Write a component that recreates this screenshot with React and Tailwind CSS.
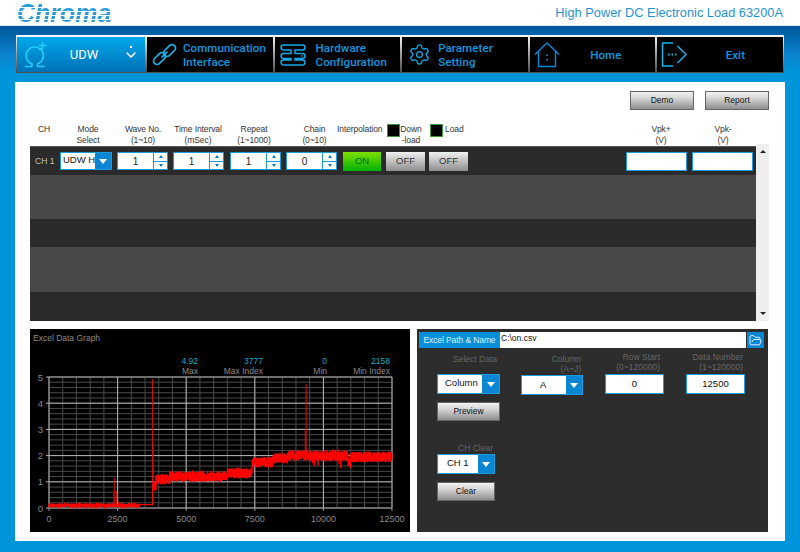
import { ChevronDown, FolderOpen, Settings } from "lucide-react";

const font = { fontFamily: "'Liberation Sans', Arial, sans-serif" };

// seeded noise so the trace is the same on every load
let seed = 7;
const rnd = () => {
  seed = (seed * 16807) % 2147483647;
  return seed / 2147483647;
};

const levelAt = (i) => {
  if (i < 3777) return 0.1;
  if (i < 3900) return 0.85;
  if (i < 4400) return 1.1;
  if (i < 6500) return 1.2;
  if (i < 7400) return 1.33;
  if (i < 8150) return 1.75;
  if (i < 8700) return 1.9;
  if (i < 10900) return 2.0;
  if (i < 11000) return 1.72;
  return 1.95;
};

const PX = (i) => 19 + (i / 12500) * 343;
const PY = (v) => 133 - v * 26.2;

const buildTrace = () => {
  const pts = [];
  for (let i = 0; i <= 12500; i += 4) {
    const base = levelAt(i);
    const amp = i < 3777 ? 0.07 : 0.2;
    let v = base + (rnd() - 0.5) * 2 * amp;
    if (i > 9400 && i < 10900 && rnd() < 0.02) v -= 0.35;
    if (i > 3300 && i < 3777) v = 0.13;
    pts.push(`${PX(i).toFixed(1)},${PY(v).toFixed(1)}`);
  }
  return pts.join(" ");
};
const trace = buildTrace();

const spikes = [
  [2400, 0.1, 1.15],
  [2370, 0.1, 0.7],
  [2470, 0.1, 0.65],
  [3777, 0.13, 4.92],
  [3790, 0.8, 2.5],
  [9370, 2, 4.72],
  [9340, 2, 3.0],
];

function Chart() {
  const minorX = [];
  for (let i = 0; i <= 12500; i += 500) minorX.push(PX(i));
  const minorY = [];
  for (let v = 0; v <= 5.01; v += 0.2) minorY.push(PY(v));
  return (
    <svg width="380" height="157" viewBox="0 0 380 157" className="block overflow-visible" style={font}>
      {minorX.map((x) => (
        <line key={x} x1={x} x2={x} y1={PY(5)} y2={PY(0)} stroke="#4a4a4a" strokeWidth="1" />
      ))}
      {minorY.map((y) => (
        <line key={y} x1={PX(0)} x2={PX(12500)} y1={y} y2={y} stroke="#4a4a4a" strokeWidth="1" />
      ))}
      {[0, 2500, 5000, 7500, 10000, 12500].map((t) => (
        <g key={t}>
          <line x1={PX(t)} x2={PX(t)} y1={PY(5)} y2={PY(0)} stroke="#b4b4b4" />
          <line x1={PX(t)} x2={PX(t)} y1={PY(0)} y2={PY(0) + 3} stroke="#999" />
          <text x={PX(t)} y={PY(0) + 14} fill="#8a8a8a" fontSize="9" textAnchor="middle">
            {t}
          </text>
        </g>
      ))}
      {[0, 1, 2, 3, 4, 5].map((v) => (
        <g key={v}>
          <line x1={PX(0) - 3} x2={PX(12500)} y1={PY(v)} y2={PY(v)} stroke="#b4b4b4" />
          <text x={PX(0) - 6} y={PY(v) + 3.5} fill="#8a8a8a" fontSize="9.5" textAnchor="end">
            {v}
          </text>
        </g>
      ))}
      <polyline points={trace} fill="none" stroke="#ff0000" strokeWidth="1.4" />
      {spikes.map(([i, a, b]) => (
        <line key={i} x1={PX(i)} x2={PX(i)} y1={PY(a)} y2={PY(b)} stroke="#e01010" strokeWidth="1" />
      ))}
    </svg>
  );
}

function OmegaIcon() {
  return (
    <svg width="24" height="27" viewBox="0 0 24 27" fill="none" stroke="#22d0f6" strokeWidth="1.6">
      <path d="M1 25.500h7v-2.700a8.600 8.600 0 1 1 5.600 0v2.700h7" />
      <path d="M18.500 1v7.500M15 4.500h7.500M17.500 7l-2 2" />
    </svg>
  );
}

function LinkIcon() {
  return (
    <svg width="25" height="25" viewBox="0 0 25 25" fill="none" stroke="#12b4ea" strokeWidth="1.7">
      <rect x="0.500" y="13" width="14" height="7" rx="3.500" transform="rotate(-45 7.500 16.500)" />
      <rect x="10.500" y="5" width="14" height="7" rx="3.500" transform="rotate(-45 17.500 8.500)" />
      <path d="M9.500 15.500l6-6" />
    </svg>
  );
}

function HardwareIcon() {
  return (
    <svg width="26" height="22" viewBox="0 0 26 22" fill="none" stroke="#12a8e6" strokeWidth="1.500">
      <path d="M3.500 1h19a2.400 2.400 0 0 1 0 5H15v3.500h7.500a2.400 2.400 0 0 1 0 5H15V16h7.500a2.400 2.400 0 0 1 0 5h-19a2.400 2.400 0 0 1 0-5H11v-1.500H3.500a2.400 2.400 0 0 1 0-5H11V6H3.500a2.400 2.400 0 0 1 0-5z" />
      <path d="M21 12h1.500" />
    </svg>
  );
}

function HomeIcon() {
  return (
    <svg width="26" height="26" viewBox="0 0 26 26" fill="none" stroke="#0a86d0" strokeWidth="1.500">
      <path d="M1 12.500 13 1l12 11.500" />
      <path d="M4.500 9.500v15h17v-15" />
      <path d="M13 12.500v1.500M13 17v1.500" strokeWidth="1.800" />
    </svg>
  );
}

function ExitIcon() {
  return (
    <svg width="26" height="25" viewBox="0 0 26 25" fill="none" stroke="#12b4ea" strokeWidth="1.500">
      <path d="M12 1H1.500v23H12" />
      <path d="M7 12.500h1.500M10.500 12.500H12M14 12.500h1.500" strokeWidth="1.800" />
      <path d="M16.500 4l8.500 8.500-8.500 8.500" />
    </svg>
  );
}

function NavButton({ icon, lines, iconClass, textClass }) {
  return (
    <div className="flex h-full w-0 flex-1 items-center bg-black">
      <div className={iconClass}>{icon}</div>
      <div className={textClass}>
        {lines.map((l) => (
          <div key={l}>{l}</div>
        ))}
      </div>
    </div>
  );
}

function Nav() {
  const navFont = { fontFamily: "Roboto, sans-serif" };
  const label = "text-[11.5px] font-medium leading-[14px] tracking-[0.1px] whitespace-nowrap text-[#0a98e0]";
  return (
    <div
      className="mx-[16px] mt-[9px] flex h-[38px] gap-[2px] bg-[linear-gradient(#ffffff,#a8a8a8_45%,#4a4a4a)] pt-[2px] pr-[1px] pb-[1px] pl-[1px]"
      style={navFont}
    >
      <div className="flex h-full w-[128px] shrink-0 items-center bg-[linear-gradient(#00a8ea,#0070b8)]">
        <div className="ml-[7px] w-[24px]">
          <OmegaIcon />
        </div>
        <div className="ml-[18px] w-[36px] text-center text-[13px] font-normal text-white">UDW</div>
        <div className="relative ml-[21px] flex w-[16px] justify-center">
          <ChevronDown size={16} strokeWidth={2.2} className="mt-[1px] text-white" />
          <span className="absolute top-0 h-[2px] w-[2px] bg-white" />
        </div>
      </div>
      <NavButton icon={<LinkIcon />} iconClass="ml-[5px] w-[25px]" textClass={`ml-[6px] ${label}`} lines={["Communication", "Interface"]} />
      <NavButton icon={<HardwareIcon />} iconClass="ml-[5px] w-[26px]" textClass={`ml-[10px] ${label}`} lines={["Hardware", "Configuration"]} />
      <NavButton
        icon={<Settings size={23} strokeWidth={1.4} className="text-[#12a8e6]" />}
        iconClass="ml-[6px] w-[23px]"
        textClass={`ml-[7px] ${label}`}
        lines={["Parameter", "Setting"]}
      />
      <NavButton icon={<HomeIcon />} iconClass="ml-[4px] w-[26px]" textClass={`ml-[24px] w-[44px] text-center ${label}`} lines={["Home"]} />
      <NavButton icon={<ExitIcon />} iconClass="ml-[4px] w-[26px]" textClass={`ml-[37px] w-[22px] text-center ${label}`} lines={["Exit"]} />
    </div>
  );
}

function SilverButton({ label, className }) {
  return (
    <div
      className={`flex items-center justify-center border border-[#666] bg-[linear-gradient(#f2f2f2,#dcdcdc_30%,#8e8e8e)] text-[8.5px] text-[#111] ${className}`}
    >
      {label}
    </div>
  );
}

function Spin({ value, className = "" }) {
  return (
    <div className={`flex h-[18px] w-[51px] border border-[#1a9be0] bg-white ${className}`}>
      <div className="flex flex-1 items-center justify-center text-[10px] text-[#222]">{value}</div>
      <div className="flex w-[14px] flex-col border-l border-[#1a9be0]">
        <div className="flex flex-1 items-center justify-center border-b border-[#1a9be0]">
          <span className="h-0 w-0 border-x-[2.5px] border-b-[3px] border-x-transparent border-b-[#0a7cc4]" />
        </div>
        <div className="flex flex-1 items-center justify-center">
          <span className="h-0 w-0 border-x-[2.5px] border-t-[3px] border-x-transparent border-t-[#0a7cc4]" />
        </div>
      </div>
    </div>
  );
}

function Select({ value, className, textClass = "pl-[2px]", arrowClass = "w-[16px]", heightClass = "h-[18px]" }) {
  return (
    <div className={`flex border border-[#1a9be0] bg-white ${heightClass} ${className}`}>
      <div className={`flex-1 text-[9.5px] leading-[13px] whitespace-nowrap text-[#111] ${textClass}`}>{value}</div>
      <div className={`flex items-center justify-center bg-[#0a86d2] ${arrowClass}`}>
        <span className="h-0 w-0 border-x-[4px] border-t-[5px] border-x-transparent border-t-white" />
      </div>
    </div>
  );
}

function Stat({ value, label, className }) {
  return (
    <div className={`text-right text-[8.5px] leading-[9.5px] ${className}`}>
      <div className="text-[#1aa6c8]">{value}</div>
      <div className="text-[#8a8a8a]">{label}</div>
    </div>
  );
}

function ChannelTable() {
  return (
    <div className="flex">
      <div className="flex h-[175px] w-[726px] flex-col border-t border-[#555] bg-[#2b2b2b]">
        <div className="flex h-[28px] items-center pl-[5px]">
          <div className="w-[25px] text-[8.5px] text-[#c4c4c4]">CH 1</div>
          <Select value="UDW H" className="w-[52px]" />
          <Spin value="1" className="ml-[5px]" />
          <Spin value="1" className="ml-[5px]" />
          <Spin value="1" className="ml-[6px]" />
          <Spin value="0" className="ml-[5px]" />
          <div className="ml-[6px] flex h-[19px] w-[38px] items-center justify-center bg-[linear-gradient(#7fe000,#00b000)] text-[9.5px] text-[#063]">
            ON
          </div>
          <div className="ml-[5px] flex h-[19px] w-[39px] items-center justify-center bg-[linear-gradient(#f0f0f0,#8e8e8e)] text-[9.5px] text-[#333]">
            OFF
          </div>
          <div className="ml-[4px] flex h-[19px] w-[39px] items-center justify-center bg-[linear-gradient(#f0f0f0,#8e8e8e)] text-[9.5px] text-[#333]">
            OFF
          </div>
          <div className="flex-1" />
          <div className="h-[19px] w-[61px] border border-[#1a9be0] bg-white" />
          <div className="mr-[3px] ml-[5px] h-[19px] w-[61px] border border-[#1a9be0] bg-white" />
        </div>
        <div className="h-[44px] bg-[#484848]" />
        <div className="h-[28px]" />
        <div className="h-[45px] bg-[#484848]" />
        <div className="flex-1" />
      </div>
      <div className="-mt-[2px] flex h-[177px] w-[13px] flex-col items-center justify-between bg-[#eeeeee] py-[6px]">
        <span className="h-0 w-0 border-x-[3px] border-b-[3px] border-x-transparent border-b-[#222]" />
        <span className="h-0 w-0 border-x-[3px] border-t-[3px] border-x-transparent border-t-[#222]" />
      </div>
    </div>
  );
}

function HeaderRow() {
  const cell = "text-center text-[8.5px] leading-[10.5px] tracking-[-0.1px] whitespace-nowrap text-[#333]";
  const left = "text-[8.5px] leading-[10.5px] tracking-[-0.1px] whitespace-nowrap text-[#333]";
  return (
    <div className="mt-[14px] flex h-[22px]">
      <div className={`w-[28px] ${cell}`}>CH</div>
      <div className={`w-[60px] ${cell}`}>
        Mode
        <br />
        Select
      </div>
      <div className={`w-[50px] ${cell}`}>
        Wave No.
        <br />
        (1~10)
      </div>
      <div className={`w-[60px] ${cell}`}>
        Time Interval
        <br />
        (mSec)
      </div>
      <div className={`w-[52px] ${cell}`}>
        Repeat
        <br />
        (1~1000)
      </div>
      <div className={`w-[57px] pl-[12px] ${cell}`}>
        Chain
        <br />
        (0~10)
      </div>
      <div className={`w-[50px] ${left}`}>Interpolation</div>
      <div className="h-[13px] w-[13px] border border-[#3a9a3a] bg-black" />
      <div className={`mr-[8px] w-[22px] ${cell}`}>
        Down
        <br />
        -load
      </div>
      <div className="h-[13px] w-[13px] border border-[#3a9a3a] bg-black" />
      <div className={`ml-[2px] ${left}`}>Load</div>
      <div className="flex-1" />
      <div className={`w-[62px] ${cell}`}>
        Vpk+
        <br />
        (V)
      </div>
      <div className={`mr-[16px] w-[62px] ${cell}`}>
        Vpk-
        <br />
        (V)
      </div>
    </div>
  );
}

function GraphPanel() {
  return (
    <div className="h-[203px] w-[380px] bg-black">
      <div className="pt-[4px] pl-[3px] text-[8.5px] leading-[11px] text-[#8a8a8a]">Excel Data Graph</div>
      <div className="mt-[13px] flex h-[18px]">
        <Stat value="4.92" label="Max" className="w-[168px]" />
        <Stat value="3777" label="Max Index" className="w-[65px]" />
        <Stat value="0" label="Min" className="w-[64px]" />
        <Stat value="2158" label="Min Index" className="w-[63px]" />
      </div>
      <Chart />
    </div>
  );
}

function ExcelPanel() {
  const lbl = "text-[8.5px] leading-[9.5px] whitespace-nowrap text-[#666]";
  return (
    <div className="ml-[7px] h-[203px] w-[351px] bg-[#2d2d2d]">
      <div className="ml-[2px] flex h-[19px] pt-[3px]">
        <div className="flex w-[81px] items-center justify-center bg-[#0a90d8] text-[8.5px] tracking-[-0.1px] whitespace-nowrap text-[#d8f0ff]">
          Excel Path &amp; Name
        </div>
        <div className="w-[246px] bg-white pl-[1px] text-[8.5px] leading-[12px] text-[#111]">C:\on.csv</div>
        <div className="ml-[1px] flex w-[17px] items-center justify-center bg-[#0a86d2]">
          <FolderOpen size={13} strokeWidth={1.6} className="text-white" />
        </div>
      </div>
      <div className="mt-[5px] flex pl-[20px]">
        <div className="w-[84px]">
          <div className={`h-[21px] w-[60px] pt-[2px] text-right ${lbl}`}>Select Data</div>
          <Select value="Column" className="w-[63px]" heightClass="h-[20px]" textClass="pl-[7px] pt-[1px]" arrowClass="w-[17px]" />
          <SilverButton label="Preview" className="mt-[8px] h-[19px] w-[63px]" />
          <div className={`mt-[23px] h-[10px] w-[56px] text-right ${lbl}`}>CH Clear</div>
          <Select value="CH 1" className="w-[58px]" heightClass="h-[20px]" textClass="pl-[9px] pt-[1px]" arrowClass="w-[16px]" />
          <SilverButton label="Clear" className="mt-[8px] h-[19px] w-[58px]" />
        </div>
        <div className="w-[84px]">
          <div className={`h-[22px] w-[60px] pt-[2px] text-right ${lbl}`}>
            Column
            <br />
            (A~J)
          </div>
          <Select value="A" className="w-[62px]" heightClass="h-[20px]" textClass="pl-[18px] pt-[2px]" arrowClass="w-[16px]" />
        </div>
        <div className="w-[81px]">
          <div className={`h-[21px] w-[55px] text-right ${lbl}`}>
            Row Start
            <br />
            (0~120000)
          </div>
          <div className="flex h-[20px] w-[59px] items-center justify-center border border-[#1a9be0] bg-white text-[9.5px] text-[#111]">0</div>
        </div>
        <div>
          <div className={`h-[21px] w-[57px] text-right ${lbl}`}>
            Data Number
            <br />
            (1~120000)
          </div>
          <div className="flex h-[20px] w-[59px] items-center justify-center border border-[#1a9be0] bg-white text-[9.5px] text-[#111]">12500</div>
        </div>
      </div>
    </div>
  );
}

export default function App() {
  return (
    <div className="flex h-[552px] w-full flex-col overflow-hidden bg-[#0094da]" style={font}>
      <div className="flex h-[26px] items-center justify-between border-b border-[#d8e4ec] bg-white pr-[17px] pl-[17px]">
        <div className="bg-[repeating-linear-gradient(180deg,#2a9ad8_0px,#2a9ad8_3px,#ffffff_3px,#ffffff_4px)] bg-clip-text text-[25px] leading-[26px] font-bold text-transparent italic">
          Chroma
        </div>
        <div className="text-[12.8px] text-[#1f93d6]">High Power DC Electronic Load 63200A</div>
      </div>
      <div className="h-[47px] bg-[linear-gradient(#00559a,#0a82cc_60%,#0094da)] pt-0">
        <Nav />
      </div>
      <div className="mx-[15px] mt-[9px] bg-white px-[15px] pt-[9px] pb-[9px]">
        <div className="flex justify-end gap-[11px] pr-[1px]">
          <SilverButton label="Demo" className="h-[19px] w-[64px]" />
          <SilverButton label="Report" className="h-[19px] w-[64px]" />
        </div>
        <HeaderRow />
        <ChannelTable />
        <div className="mt-[8px] flex">
          <GraphPanel />
          <ExcelPanel />
        </div>
      </div>
    </div>
  );
}
